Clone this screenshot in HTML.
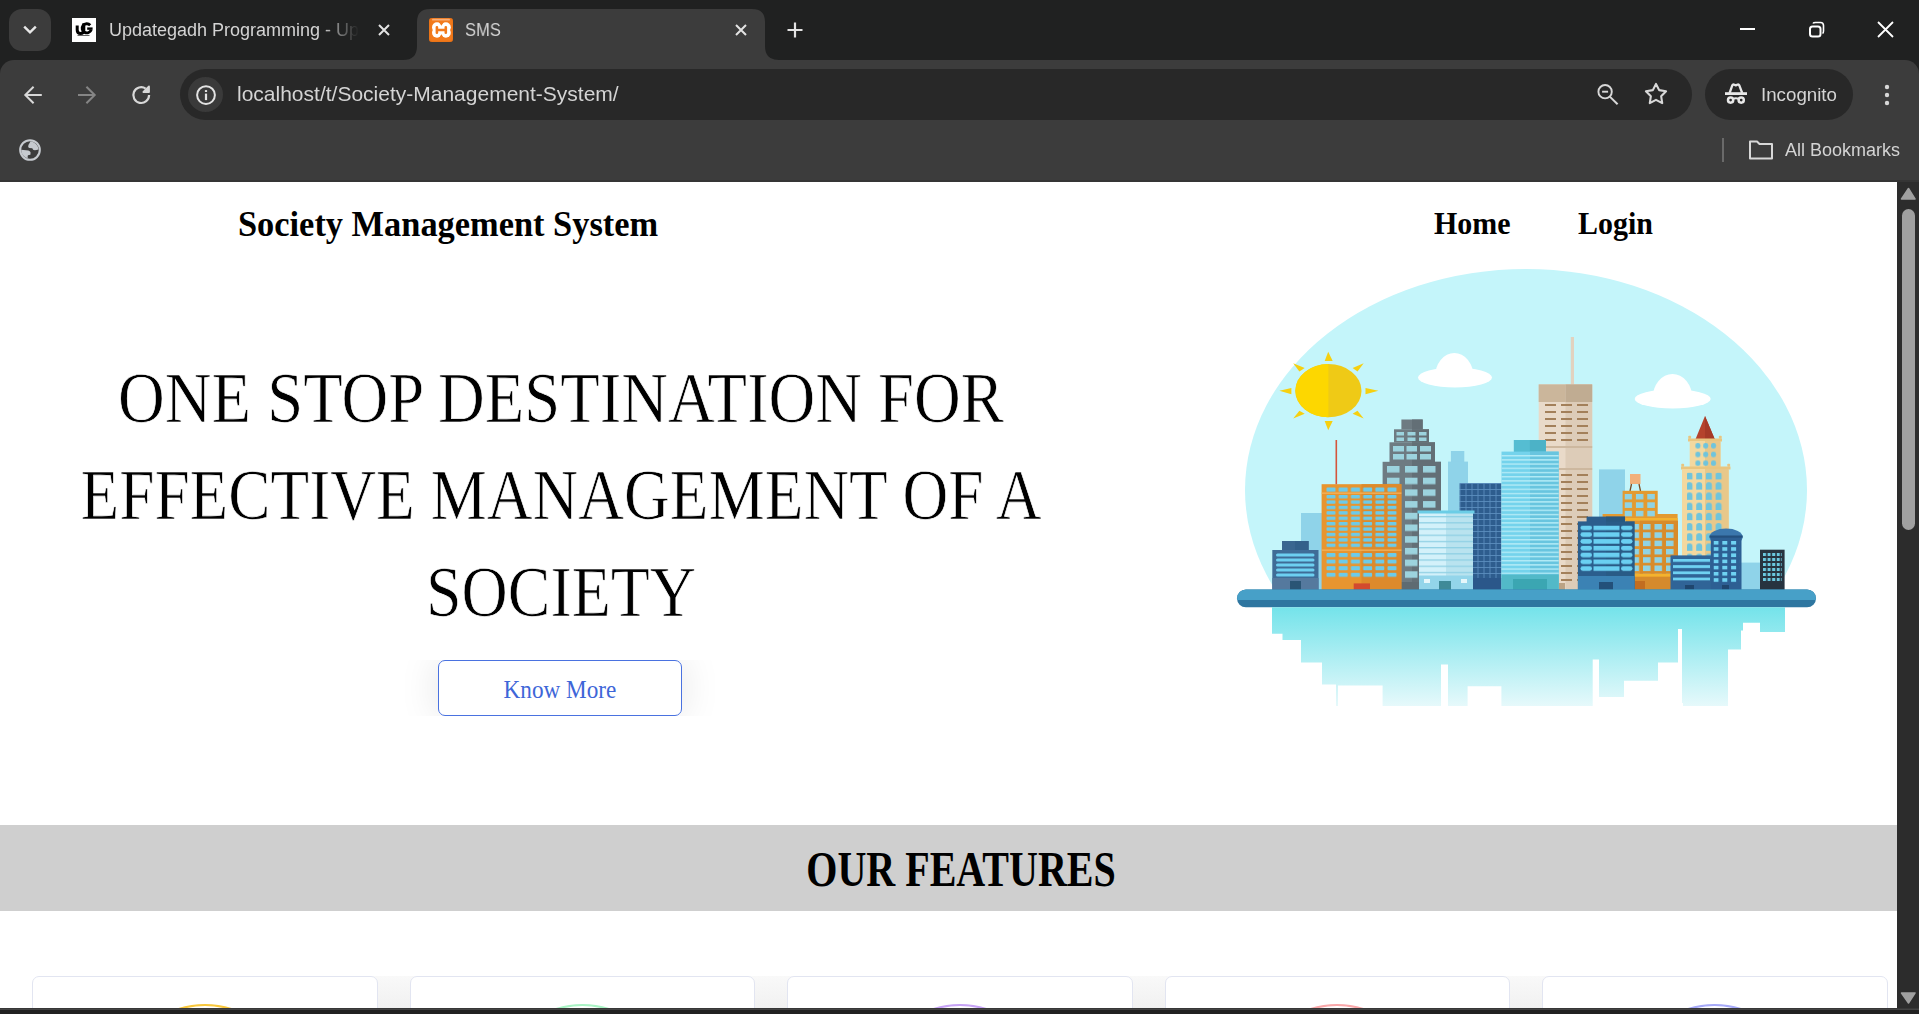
<!DOCTYPE html>
<html><head><meta charset="utf-8">
<style>
*{margin:0;padding:0;box-sizing:border-box}
html,body{width:1919px;height:1014px;overflow:hidden;background:#202121}
body{position:relative;font-family:"Liberation Sans",sans-serif}
.a{position:absolute}
svg{position:absolute;overflow:visible}
.serif{font-family:"Liberation Serif",serif}
.nw{white-space:nowrap}
.ct{will-change:transform;color:#d4d4d4 !important}
</style></head><body>

<!-- ============ TAB STRIP ============ -->
<div class="a" style="left:9px;top:9px;width:42px;height:42px;border-radius:13px;background:#3c3c3c"></div>
<svg style="left:0;top:0" width="60" height="60"><path d="M24.2 26.6 L30 32.4 L35.8 26.6" fill="none" stroke="#e8e8e8" stroke-width="2.4"/></svg>

<!-- inactive tab -->
<div class="a" style="left:72px;top:18px;width:24px;height:24px;background:#fff"></div>
<svg style="left:70px;top:16px" width="28" height="28">
<path d="M7.2 9.5 V14 Q7.2 17.6 10.6 17.6 Q13.8 17.6 13.8 14 V7.2" fill="none" stroke="#000" stroke-width="3"/>
<path d="M20.2 9.2 A4.6 4.6 0 1 0 21.2 13.6" fill="none" stroke="#000" stroke-width="2.9"/>
<path d="M17.2 12.6 H22.6" stroke="#000" stroke-width="2.4"/>
<path d="M7.5 19.5 H19.5" stroke="#555" stroke-width="0.9"/>
</svg>
<div class="a nw ct" style="left:109px;top:19px;width:250px;overflow:hidden;font-size:18px;line-height:22px;color:#e3e3e3;-webkit-mask-image:linear-gradient(90deg,#000 85%,transparent 100%)">Updategadh Programming - Up</div>
<svg style="left:0;top:0" width="400" height="60"><path d="M379 25 L389 35 M389 25 L379 35" stroke="#e3e3e3" stroke-width="2"/></svg>

<!-- active tab -->
<svg style="left:0;top:0" width="820" height="62">
<path d="M403 60 Q417 60 417 46 L417 22 Q417 9 430 9 L752 9 Q765 9 765 22 L765 46 Q765 60 779 60 Z" fill="#3c3c3c"/>
</svg>
<div class="a" style="left:429px;top:18px;width:24px;height:24px;border-radius:3px;background:#f27a1c;box-shadow:inset 0 0 2px #d9650f"></div>
<svg style="left:0;top:0" width="460" height="50">
<rect x="432" y="18.8" width="18" height="1.8" rx="0.9" fill="#f7ae78"/>
<g fill="#fff"><circle cx="437" cy="27.2" r="5"/><circle cx="445.8" cy="27.2" r="5"/><circle cx="437" cy="32.8" r="5"/><circle cx="445.8" cy="32.8" r="5"/><rect x="436" y="25" width="11" height="10"/></g>
<g fill="#f27a1c"><path d="M439 22 L441.4 25.8 L443.8 22Z"/><path d="M439 38 L441.4 34.2 L443.8 38Z"/></g>
<path d="M436.9 27.2 V32.8 M445.8 27.2 V32.8 M436.9 30 H445.8" stroke="#f27a1c" stroke-width="2.6" stroke-linecap="round"/>
</svg>
<div class="a nw ct" style="left:465px;top:19px;font-size:18px;line-height:22px;color:#e3e3e3;transform-origin:0 0;transform:scaleX(0.92)">SMS</div>
<svg style="left:0;top:0" width="800" height="60"><path d="M736 25 L746 35 M746 25 L736 35" stroke="#e3e3e3" stroke-width="2"/>
<path d="M795 22.5 L795 37.5 M787.5 30 L802.5 30" stroke="#e3e3e3" stroke-width="2.2"/></svg>

<!-- window controls -->
<svg style="left:0;top:0" width="1919" height="60">
<path d="M1740 29 L1755 29" stroke="#fff" stroke-width="2"/>
<rect x="1810" y="26.5" width="10.5" height="10" rx="2.5" fill="none" stroke="#fff" stroke-width="2"/>
<path d="M1813 23.5 Q1813.5 22.5 1815.5 22.5 L1820.5 22.5 Q1823.5 22.5 1823.5 25.5 L1823.5 31 Q1823.5 33 1822.5 33.5" fill="none" stroke="#fff" stroke-width="1.6"/>
<path d="M1878 22 L1893 37 M1893 22 L1878 37" stroke="#fff" stroke-width="1.8"/>
</svg>

<!-- ============ TOOLBAR ============ -->
<div class="a" style="left:0;top:60px;width:1919px;height:122px;background:#3c3c3c;border-radius:14px 14px 0 0"></div>
<div class="a" style="left:0;top:180px;width:1919px;height:2px;background:#353535"></div>

<svg style="left:0;top:60px" width="180" height="60">
<path d="M41.8 35 L25.8 35 M33.6 26.7 L25.3 35 L33.6 43.3" fill="none" stroke="#d8d8d8" stroke-width="2"/>
<path d="M78 35 L94.2 35 M86.4 26.7 L94.7 35 L86.4 43.3" fill="none" stroke="#858585" stroke-width="2"/>
<path d="M149.1 35.1 A7.9 7.9 0 1 1 145.7 28.6" fill="none" stroke="#d8d8d8" stroke-width="2.2"/>
<path d="M143.4 32 H149 V26.4 Z" fill="#d8d8d8" stroke="#d8d8d8" stroke-width="1.8" stroke-linejoin="round"/>
</svg>

<div class="a" style="left:180px;top:69px;width:1512px;height:51px;border-radius:26px;background:#282828"></div>
<div class="a" style="left:188px;top:77px;width:35px;height:35px;border-radius:50%;background:#3a3a3a"></div>
<svg style="left:0;top:60px" width="240" height="60">
<circle cx="206" cy="35.1" r="8.9" fill="none" stroke="#e3e3e3" stroke-width="2"/>
<path d="M206 33.6 L206 40.1" stroke="#e3e3e3" stroke-width="2.2"/>
<rect x="204.9" y="30.1" width="2.2" height="1.9" fill="#e3e3e3"/>
</svg>
<div class="a nw ct" style="left:237px;top:82px;font-size:21px;line-height:24px;color:#e3e3e3">localhost/t/Society-Management-System/</div>

<svg style="left:1580px;top:60px" width="120" height="60">
<circle cx="25.1" cy="31.7" r="6.7" fill="none" stroke="#d8d8d8" stroke-width="1.9"/>
<path d="M22.1 31.7 L28.1 31.7" stroke="#d8d8d8" stroke-width="1.9"/>
<path d="M29.8 36.6 L37.6 44.2" stroke="#d8d8d8" stroke-width="2"/>
<polygon points="76.00,23.90 79.17,30.13 86.08,31.22 81.14,36.17 82.23,43.08 76.00,39.90 69.77,43.08 70.86,36.17 65.92,31.22 72.83,30.13" fill="none" stroke="#d8d8d8" stroke-width="2.1" stroke-linejoin="round"/>
</svg>

<div class="a" style="left:1705px;top:69px;width:148px;height:51px;border-radius:26px;background:#282828"></div>
<svg style="left:1700px;top:60px" width="60" height="60">
<path d="M25 33.6 L47 33.6" stroke="#e8e8e8" stroke-width="2.8"/>
<path d="M29.6 33 L32.2 25.6 Q32.9 24.1 34.4 24.7 L35.8 25.4 L37.2 24.7 Q38.7 24.1 39.4 25.6 L42.2 33" fill="none" stroke="#e8e8e8" stroke-width="2.3" stroke-linejoin="round"/>
<circle cx="30.6" cy="40.1" r="2.6" fill="none" stroke="#e8e8e8" stroke-width="2.5"/>
<circle cx="41.2" cy="40.1" r="2.6" fill="none" stroke="#e8e8e8" stroke-width="2.5"/>
<path d="M32.8 39 Q35.9 37.6 39 39" fill="none" stroke="#e8e8e8" stroke-width="2"/>
</svg>
<div class="a nw ct" style="left:1761px;top:84px;font-size:18px;line-height:22px;color:#e3e3e3;transform-origin:0 0;transform:scaleX(1.04)">Incognito</div>
<svg style="left:1870px;top:60px" width="40" height="60">
<circle cx="17" cy="27" r="2.2" fill="#d8d8d8"/><circle cx="17" cy="35" r="2.2" fill="#d8d8d8"/><circle cx="17" cy="43" r="2.2" fill="#d8d8d8"/>
</svg>

<!-- bookmarks bar -->
<svg style="left:16px;top:136px" width="28" height="28">
<circle cx="14" cy="14" r="9.8" fill="none" stroke="#c6cacf" stroke-width="2.1"/>
<path d="M14.6 5.2 L12.4 9.1 L12.2 11 Q12.6 12.2 16.3 12.2 L17.1 13.8 Q18.5 14.6 22.5 13.6 A9 9 0 0 0 14.6 5.2Z" fill="#c6cacf"/>
<path d="M5.2 13.8 L12.4 14.4 Q14.6 15.5 14.6 16.6 L14.4 18.8 L11.9 19.3 L11.6 21 L11.9 22.6 A9 9 0 0 1 5.2 13.8Z" fill="#c6cacf"/>
</svg>
<div class="a" style="left:1722px;top:138px;width:2px;height:24px;background:#6a6a6a"></div>
<svg style="left:1740px;top:130px" width="40" height="40">
<path d="M10 11.5 L17 11.5 L19.5 14 L32 14 L32 28.5 L10 28.5 Z" fill="none" stroke="#d8d8d8" stroke-width="2" stroke-linejoin="round"/>
</svg>
<div class="a nw ct" style="left:1785px;top:139px;font-size:18px;line-height:22px;color:#e3e3e3">All Bookmarks</div>

<!-- ============ PAGE ============ -->
<div class="a" id="page" style="left:0;top:182px;width:1897px;height:826px;background:#fff;overflow:hidden"></div>

<!-- header -->
<div class="a nw serif" id="t_title" style="left:238px;top:202px;font-weight:bold;font-size:36px;line-height:44px;color:#000;transform-origin:0 0;transform:scaleX(0.955)">Society Management System</div>
<div class="a nw serif" id="t_home" style="left:1434px;top:204px;font-weight:bold;font-size:31.5px;transform-origin:0 0;transform:scaleX(0.95);line-height:40px;color:#000">Home</div>
<div class="a nw serif" id="t_login" style="left:1578px;top:204px;font-weight:bold;font-size:31.5px;transform-origin:0 0;transform:scaleX(0.95);line-height:40px;color:#000">Login</div>

<!-- hero text -->
<div class="a nw serif" id="h1" style="left:-139px;width:1400px;text-align:center;top:358px;font-size:71px;line-height:80px;color:#000;-webkit-text-stroke:0.7px #fff;transform:scaleX(0.911)">ONE STOP DESTINATION FOR</div>
<div class="a nw serif" id="h2" style="left:-139px;width:1400px;text-align:center;top:455px;font-size:71px;line-height:80px;color:#000;-webkit-text-stroke:0.7px #fff;transform:scaleX(0.8918)">EFFECTIVE MANAGEMENT OF A</div>
<div class="a nw serif" id="h3" style="left:-139px;width:1400px;text-align:center;top:552px;font-size:71px;line-height:80px;color:#000;-webkit-text-stroke:0.7px #fff;transform:scaleX(0.9005)">SOCIETY</div>

<!-- button -->
<div class="a" style="left:398px;top:660px;width:324px;height:56px;overflow:hidden">
  <div class="a" style="left:40px;top:0;width:244px;height:56px;border-radius:7px;box-shadow:0 0 40px rgba(0,0,0,0.11)"></div>
</div>
<div class="a" style="left:438px;top:660px;width:244px;height:56px;border:1px solid #4a72e0;border-radius:7px;background:#fff"></div>
<div class="a nw serif" id="t_btn" style="left:438px;width:244px;text-align:center;top:675px;font-size:25.5px;line-height:30px;color:#3e66d8;transform:scaleX(0.91)">Know More</div>

<!-- features band -->
<div class="a" style="left:0;top:825px;width:1897px;height:86px;background:#cfcfcf"></div>
<div class="a nw serif" id="t_feat" style="left:461px;width:1000px;text-align:center;top:841px;font-weight:bold;font-size:50px;line-height:56px;color:#000;transform:scaleX(0.8005)">OUR FEATURES</div>

<!-- cards -->
<div class="a" style="left:0;top:976px;width:1897px;height:32px;overflow:hidden">
  <div class="a" style="left:369px;top:0;width:49px;height:32px;background:linear-gradient(#f9f9f9,#f1f1f1)"></div>
  <div class="a" style="left:746px;top:0;width:49px;height:32px;background:linear-gradient(#f9f9f9,#f1f1f1)"></div>
  <div class="a" style="left:1124px;top:0;width:49px;height:32px;background:linear-gradient(#f9f9f9,#f1f1f1)"></div>
  <div class="a" style="left:1501px;top:0;width:49px;height:32px;background:linear-gradient(#f9f9f9,#f1f1f1)"></div>
  <div class="a" style="left:32px;top:0;width:346px;height:60px;border:1px solid #e2e5f1;border-radius:7px;background:#fff"></div>
  <div class="a" style="left:410px;top:0;width:345px;height:60px;border:1px solid #e2e5f1;border-radius:7px;background:#fff"></div>
  <div class="a" style="left:787px;top:0;width:346px;height:60px;border:1px solid #e2e5f1;border-radius:7px;background:#fff"></div>
  <div class="a" style="left:1165px;top:0;width:345px;height:60px;border:1px solid #e2e5f1;border-radius:7px;background:#fff"></div>
  <div class="a" style="left:1542px;top:0;width:346px;height:60px;border:1px solid #e2e5f1;border-radius:7px;background:#fff"></div>
  <svg style="left:0;top:0" width="1897" height="40">
    <circle cx="205" cy="116" r="87" fill="none" stroke="#f8c73c" stroke-width="2.2"/>
    <circle cx="582.5" cy="116" r="87" fill="none" stroke="#a9f3c4" stroke-width="2.2"/>
    <circle cx="960" cy="116" r="87" fill="none" stroke="#c7a3f6" stroke-width="2.2"/>
    <circle cx="1337" cy="116" r="87" fill="none" stroke="#f9a7a9" stroke-width="2.2"/>
    <circle cx="1714.5" cy="116" r="87" fill="none" stroke="#a6a9f8" stroke-width="2.2"/>
  </svg>
</div>

<!-- CITY -->
<svg id="city" style="left:1200px;top:230px" width="640" height="490" viewBox="1200 230 640 490">
<defs>
<linearGradient id="refl" x1="0" y1="0" x2="0" y2="1">
<stop offset="0" stop-color="#74e3ea"/><stop offset="1" stop-color="#e6f9fb"/>
</linearGradient>
<pattern id="pOr0" x="1326" y="487.3" width="12.2" height="10" patternUnits="userSpaceOnUse"><rect x="0.5" y="0" width="9" height="4.6" rx="1.2" fill="#6ccbea"/></pattern>
<pattern id="pOr" x="1326" y="495" width="12.2" height="5.4" patternUnits="userSpaceOnUse"><rect x="0.5" y="0" width="9" height="3.4" rx="1" fill="#6ccbea"/></pattern>
<pattern id="pOr2" x="1326" y="553" width="12.2" height="6.6" patternUnits="userSpaceOnUse"><rect x="0.5" y="0" width="9" height="4" rx="1" fill="#6ccbea"/></pattern>
<pattern id="pGray" x="1387" y="466" width="18" height="11.7" patternUnits="userSpaceOnUse"><rect x="0" y="0" width="12.5" height="6.5" fill="#9cd3de"/></pattern>
<pattern id="pGrid" x="1459.5" y="483" width="6" height="6" patternUnits="userSpaceOnUse"><rect x="0" y="0" width="6" height="6" fill="#2e5d8e"/><path d="M0 0.5 H6 M0.5 0 V6" stroke="#5a8dbd" stroke-width="0.9"/></pattern>
<pattern id="pCyan" x="1501.5" y="455" width="57" height="4.2" patternUnits="userSpaceOnUse"><rect x="0" y="0" width="57" height="1.4" fill="#b3ebf6"/></pattern>
<pattern id="pBeige" x="1545" y="404" width="16" height="7" patternUnits="userSpaceOnUse"><rect x="0" y="0" width="11" height="2" fill="#a3805a"/></pattern>
<pattern id="pWhite" x="1419" y="516" width="54" height="6.2" patternUnits="userSpaceOnUse"><rect x="0" y="0" width="54" height="1.3" fill="#8fd0e4"/></pattern>
<pattern id="pOval" x="1579" y="525.5" width="56" height="6.8" patternUnits="userSpaceOnUse"><rect x="1.5" y="0" width="11.5" height="4.6" rx="2.3" fill="#6ad0f2"/><rect x="14.5" y="0" width="26" height="4.6" fill="#6ad0f2"/><rect x="42" y="0" width="11.5" height="4.6" rx="2.3" fill="#6ad0f2"/></pattern>
<pattern id="pOrR" x="1624.5" y="493.8" width="11.4" height="8.5" patternUnits="userSpaceOnUse"><rect x="0" y="0" width="7.5" height="5.6" fill="#8fd3e4"/></pattern>
<pattern id="pOrR2" x="1631.5" y="524" width="11.5" height="8.3" patternUnits="userSpaceOnUse"><rect x="0" y="0" width="7.5" height="5.6" fill="#8fd3e4"/></pattern>
<pattern id="pTan" x="1686.5" y="472" width="9.7" height="10.2" patternUnits="userSpaceOnUse"><path d="M0 7.5 V3 A3 3 0 0 1 6 3 V7.5Z" fill="#6fc4dc"/></pattern>
<pattern id="pTan2" x="1695.4" y="443" width="7.8" height="8.7" patternUnits="userSpaceOnUse"><rect x="0" y="0" width="5" height="5.5" rx="2.2" fill="#6fc4dc"/></pattern>
<pattern id="pBlueW" x="1673" y="559" width="40" height="6.2" patternUnits="userSpaceOnUse"><rect x="0" y="0" width="37" height="2.8" fill="#6fd2f2"/></pattern>
<pattern id="pDome" x="1713.5" y="541" width="8.8" height="6.2" patternUnits="userSpaceOnUse"><rect x="0" y="0" width="5" height="3.6" fill="#6fd2f2"/></pattern>
<pattern id="pDark" x="1763" y="553" width="4.6" height="5" patternUnits="userSpaceOnUse"><rect x="0" y="0" width="3" height="3" fill="#6bc8df"/></pattern>
</defs>

<!-- sky -->
<clipPath id="skyclip"><rect x="1200" y="230" width="640" height="368"/></clipPath>
<ellipse cx="1526" cy="490" rx="281" ry="221" fill="#c4f5fa" clip-path="url(#skyclip)"/>

<!-- sun -->
<g fill="#f6d00f">
<polygon points="1328.2,351.7 1324.7,361 1332.7,361"/>
<polygon points="1328.2,430.2 1324.7,420.9 1332.7,420.9"/>
<polygon points="1279.4,390.8 1291.4,388 1291.4,394.2"/>
<polygon points="1378.4,390.8 1365.5,388 1365.5,394.2"/>
<polygon points="1293.2,363.2 1299.4,371.6 1304.7,368.1"/>
<polygon points="1363.7,363.2 1357.5,371.6 1352.6,368.1"/>
<polygon points="1293.2,418.6 1299.4,410.7 1304.7,413.8"/>
<polygon points="1363.7,418.6 1357.5,410.7 1352.6,413.8"/>
</g>
<ellipse cx="1328.4" cy="390.7" rx="33.1" ry="26.6" fill="#efca16"/>
<path d="M1328.4 364.1 A33.1 26.6 0 0 0 1328.4 417.3 Z" fill="#fdd700"/>

<!-- clouds -->
<g fill="#fff">
<ellipse cx="1455" cy="377.5" rx="37" ry="10"/>
<path d="M1435 377 A19.3 24 0 0 1 1473.6 377 Z"/>
<ellipse cx="1672.7" cy="398.9" rx="38" ry="9.5"/>
<path d="M1652.7 398 A19.8 24 0 0 1 1692.3 398 Z"/>
</g>

<!-- back silhouettes -->
<g fill="#8fd3e9">
<rect x="1301" y="513" width="22" height="77"/>
<rect x="1450.9" y="451" width="13.4" height="12"/>
<rect x="1448" y="461.6" width="20" height="130"/>
<rect x="1599" y="469.4" width="26" height="121"/>
<rect x="1741" y="562.6" width="19" height="28"/>
</g>

<!-- C gray tiered -->
<g fill="#6e7b82">
<rect x="1401.4" y="419.5" width="21.3" height="10"/>
<rect x="1394" y="429.3" width="35" height="13.2"/>
<rect x="1389.5" y="442.3" width="45.5" height="19.7"/>
<rect x="1382.6" y="461.8" width="58.4" height="128.2"/>
</g>
<g fill="#636f76">
<rect x="1412" y="419.5" width="10.7" height="10"/>
<rect x="1412" y="429.3" width="17" height="13.2"/>
<rect x="1412" y="442.3" width="23" height="19.7"/>
<rect x="1412" y="461.8" width="29" height="128.2"/>
</g>
<g fill="#9cd3de">
<rect x="1396.5" y="432" width="7.5" height="3.5"/><rect x="1407.5" y="432" width="8" height="3.5"/><rect x="1419" y="432" width="7.5" height="3.5"/>
<rect x="1396.5" y="437.5" width="7.5" height="3.5"/><rect x="1407.5" y="437.5" width="8" height="3.5"/><rect x="1419" y="437.5" width="7.5" height="3.5"/>
<rect x="1393" y="446" width="11" height="5.5"/><rect x="1406.5" y="446" width="10.5" height="5.5"/><rect x="1420" y="446" width="11" height="5.5"/>
<rect x="1393" y="454" width="11" height="5.5"/><rect x="1406.5" y="454" width="10.5" height="5.5"/><rect x="1420" y="454" width="11" height="5.5"/>
</g>
<rect x="1387" y="466" width="54" height="117" fill="url(#pGray)"/>
<rect x="1382.6" y="582" width="58.4" height="8" fill="#5e6b72"/>

<!-- A small dark blue left -->
<rect x="1282" y="541" width="26.6" height="10" fill="#3a6690"/>
<rect x="1295" y="541" width="13.6" height="10" fill="#33608a"/>
<rect x="1272.3" y="550" width="46.2" height="40" fill="#3f6c97"/>
<g fill="#6dcff1">
<rect x="1276" y="553.5" width="38.5" height="3" rx="1.5"/>
<rect x="1276" y="558.5" width="38.5" height="3" rx="1.5"/>
<rect x="1276" y="563.5" width="38.5" height="3" rx="1.5"/>
<rect x="1276" y="568.5" width="38.5" height="3" rx="1.5"/>
<rect x="1276" y="573.5" width="38.5" height="3" rx="1.5"/>
</g>
<rect x="1272.3" y="578" width="46.2" height="12" fill="#55799e"/>
<rect x="1290" y="581" width="11" height="9" fill="#2a5575"/>

<!-- B orange -->
<rect x="1321.6" y="484.2" width="79.8" height="105.8" fill="#e8952f"/>
<rect x="1361.5" y="484.2" width="39.9" height="105.8" fill="#dd8a2b"/>
<rect x="1321.6" y="492.5" width="79.8" height="1.3" fill="#f3b45c"/>
<rect x="1321.6" y="549.5" width="79.8" height="1.3" fill="#f3b45c"/>
<rect x="1335.5" y="440" width="1.6" height="44.2" fill="#d4553c"/>
<rect x="1326" y="487.3" width="73" height="5" fill="url(#pOr0)"/>
<rect x="1326" y="495" width="73" height="53" fill="url(#pOr)"/>
<rect x="1326" y="553" width="73" height="26" fill="url(#pOr2)"/>
<rect x="1353.7" y="583.4" width="16.3" height="6.6" fill="#d24a2e"/>

<!-- E dark blue grid -->
<rect x="1459.5" y="483" width="42" height="107" fill="url(#pGrid)"/>
<rect x="1459.5" y="578" width="42" height="12" fill="#2b578a"/>

<!-- D white building -->
<rect x="1419" y="512.5" width="54" height="77.5" fill="#d3f1fa"/>
<rect x="1446" y="512.5" width="27" height="77.5" fill="#b9e3ef"/>
<rect x="1419" y="516" width="54" height="58" fill="url(#pWhite)"/>
<rect x="1417.5" y="510.5" width="57" height="3" fill="#6bcde6"/>
<rect x="1419" y="575.5" width="54" height="14.5" fill="#93d5ea"/>
<rect x="1424" y="579" width="6" height="4" fill="#e6f7fb"/>
<rect x="1461" y="579" width="6" height="4" fill="#e6f7fb"/>
<rect x="1439" y="581" width="12" height="9" fill="#3f8a98"/>

<!-- G beige tower -->
<rect x="1570.8" y="337" width="3.2" height="48" fill="#e2d2bf"/>
<rect x="1538.7" y="384.4" width="53.5" height="205.6" fill="#e9dac9"/>
<rect x="1565.5" y="384.4" width="26.7" height="205.6" fill="#ddccb8"/>
<rect x="1538.7" y="384.4" width="26.8" height="17.6" fill="#cbb69b"/>
<rect x="1565.5" y="384.4" width="26.7" height="17.6" fill="#c0ac92"/>
<rect x="1545" y="404" width="44" height="40" fill="url(#pBeige)"/>
<rect x="1538.7" y="446" width="53.5" height="2" fill="#cdb89f"/>
<rect x="1538.7" y="468" width="53.5" height="2" fill="#cdb89f"/>
<rect x="1545" y="473" width="44" height="110" fill="url(#pBeige)"/>
<rect x="1557" y="583" width="8" height="7" fill="#bba385"/>

<!-- F cyan tower -->
<rect x="1513.8" y="440" width="32.1" height="12" fill="#55bdd2"/>
<rect x="1529.8" y="440" width="16.1" height="12" fill="#4cb2c7"/>
<rect x="1501.5" y="451.6" width="57.2" height="138.4" fill="#74d3ec"/>
<rect x="1530" y="451.6" width="28.7" height="138.4" fill="#68c5df"/>
<rect x="1501.5" y="455" width="57.2" height="119" fill="url(#pCyan)"/>
<rect x="1501.5" y="574.6" width="57.2" height="15.4" fill="#52b9c8"/>
<rect x="1513" y="579" width="34" height="11" fill="#3ba6b2"/>

<!-- I orange right (behind H) -->
<rect x="1630" y="474" width="10.5" height="10" fill="#f2b07a"/>
<path d="M1631.5 484 L1630 491 M1639 484 L1640.5 491" stroke="#7a4a22" stroke-width="1.3"/>
<rect x="1602.6" y="514" width="75" height="6.7" fill="#e39a30"/>
<rect x="1625.6" y="518" width="52" height="2.7" fill="#f4b22e"/>
<rect x="1625.6" y="520.7" width="52.4" height="69.3" fill="#e0952f"/>
<rect x="1640" y="520.7" width="38" height="69.3" fill="#d88b2a"/>
<rect x="1631.5" y="524" width="44" height="50" fill="url(#pOrR2)"/>
<rect x="1625.6" y="573.8" width="52.4" height="3" fill="#f4b22e"/>
<rect x="1625.6" y="576.8" width="52.4" height="13.2" fill="#d58a2c"/>
<rect x="1635" y="581" width="10" height="9" fill="#c26d20"/>
<rect x="1622.6" y="490.8" width="35.1" height="27" fill="#e39a30"/>
<rect x="1624.5" y="493.8" width="32" height="23" fill="url(#pOrR)"/>
<!-- H blue oval -->
<rect x="1586.6" y="516.6" width="38.4" height="6" fill="#2b5e8d"/>
<rect x="1577.9" y="521.4" width="56.7" height="68.6" fill="#2b5e8d"/>
<rect x="1606" y="516.6" width="19" height="5" fill="#28587f"/>
<rect x="1606" y="521.4" width="28.6" height="68.6" fill="#28587f" opacity="0.45"/>
<rect x="1579" y="525.5" width="55" height="47" fill="url(#pOval)"/>
<rect x="1577.9" y="576" width="56.7" height="14" fill="#3b82b4"/>
<rect x="1599" y="582" width="14" height="8" fill="#23507a"/>

<!-- J tan tower -->
<polygon points="1705,416 1695.4,439.5 1714.9,439.5" fill="#b5432c"/>
<polygon points="1705,416 1705,439.5 1714.9,439.5" fill="#a53a27"/>
<rect x="1688" y="438.5" width="34" height="3" fill="#e9c57f"/>
<rect x="1688.3" y="435.8" width="2.8" height="3" rx="0.8" fill="#e9c57f"/><rect x="1718.9" y="435.8" width="2.8" height="3" rx="0.8" fill="#e9c57f"/><rect x="1681.3" y="463.8" width="2.8" height="3" rx="0.8" fill="#e9c57f"/><rect x="1727.3" y="463.8" width="2.8" height="3" rx="0.8" fill="#e9c57f"/>
<rect x="1689.7" y="441" width="30.8" height="27" fill="#f3d89f"/>
<rect x="1705" y="441" width="15.5" height="27" fill="#e8c88a"/>
<rect x="1681" y="466.5" width="49.5" height="3" fill="#e9c57f"/>
<rect x="1682" y="469" width="46.7" height="121" fill="#f3d89f"/>
<rect x="1705" y="469" width="23.7" height="121" fill="#e8c88a"/>
<rect x="1695" y="443" width="22" height="23" fill="url(#pTan2)"/>
<rect x="1687" y="472.8" width="36" height="86" fill="url(#pTan)"/>

<!-- K blue wide low -->
<rect x="1670.5" y="555.4" width="42.3" height="34.6" fill="#306497"/>
<rect x="1673" y="559" width="38" height="22" fill="url(#pBlueW)"/>
<rect x="1685" y="585" width="9" height="5" fill="#1f466e"/>

<!-- L domed -->
<ellipse cx="1726.1" cy="537" rx="16.5" ry="8.5" fill="#3b77ad"/>
<rect x="1710.8" y="537" width="30.7" height="53" fill="#2d5f93"/>
<rect x="1709.5" y="535.5" width="33.2" height="2.2" fill="#24507e"/>
<rect x="1713.5" y="541" width="26" height="43" fill="url(#pDome)"/>
<rect x="1722" y="585" width="7" height="5" fill="#1f466e"/>

<!-- M dark -->
<rect x="1760" y="549.7" width="24.6" height="40.3" fill="#27333f"/>
<rect x="1763" y="553" width="19" height="30" fill="url(#pDark)"/>

<!-- platform -->
<rect x="1237" y="589.5" width="579" height="17.8" rx="8.9" fill="#2e76a0"/>
<path d="M1246 589.5 H1807 A8.9 8.9 0 0 1 1815.9 598.4 V600 H1237.1 V598.4 A8.9 8.9 0 0 1 1246 589.5Z" fill="#47a0c8"/>

<!-- reflection -->
<path d="M1272 607.3 H1785 V632 H1760 V622.8 H1743 V630.6 H1741 V649.4 H1728 V706 H1683 V703 H1679 V662.5 H1658 V680.7 H1624 V697 H1599 V659.4 H1592.7 V706 H1501.4 V686.3 H1467.6 V706 H1448 V664.4 H1441 V706 H1382.6 V685.4 H1338 V706 H1336 V684.4 H1322 V662.5 H1301 V640 H1282.5 V633.8 H1272 Z" fill="url(#refl)"/>
<rect x="1678" y="629" width="4" height="80" fill="#fff"/>

</svg>

<!-- scrollbar -->
<div class="a" style="left:1897px;top:182px;width:22px;height:826px;background:#2c2c2c"></div>
<svg style="left:1897px;top:182px" width="22" height="826">
<path d="M11.5 6.5 L18 17 L4.5 17 Z" fill="#a0a0a0" stroke="#a0a0a0" stroke-width="1.5" stroke-linejoin="round"/>
<rect x="5" y="27" width="13" height="321" rx="6.5" fill="#a0a0a0"/>
<path d="M11.5 821 L18 811 L4.5 811 Z" fill="#a0a0a0" stroke="#a0a0a0" stroke-width="1.5" stroke-linejoin="round"/>
</svg>

<!-- bottom strip -->
<div class="a" style="left:0;top:1008px;width:1919px;height:6px;background:linear-gradient(#373737 0 1px,#434343 1px 2px,#212121 2px)"></div>

</body></html>
